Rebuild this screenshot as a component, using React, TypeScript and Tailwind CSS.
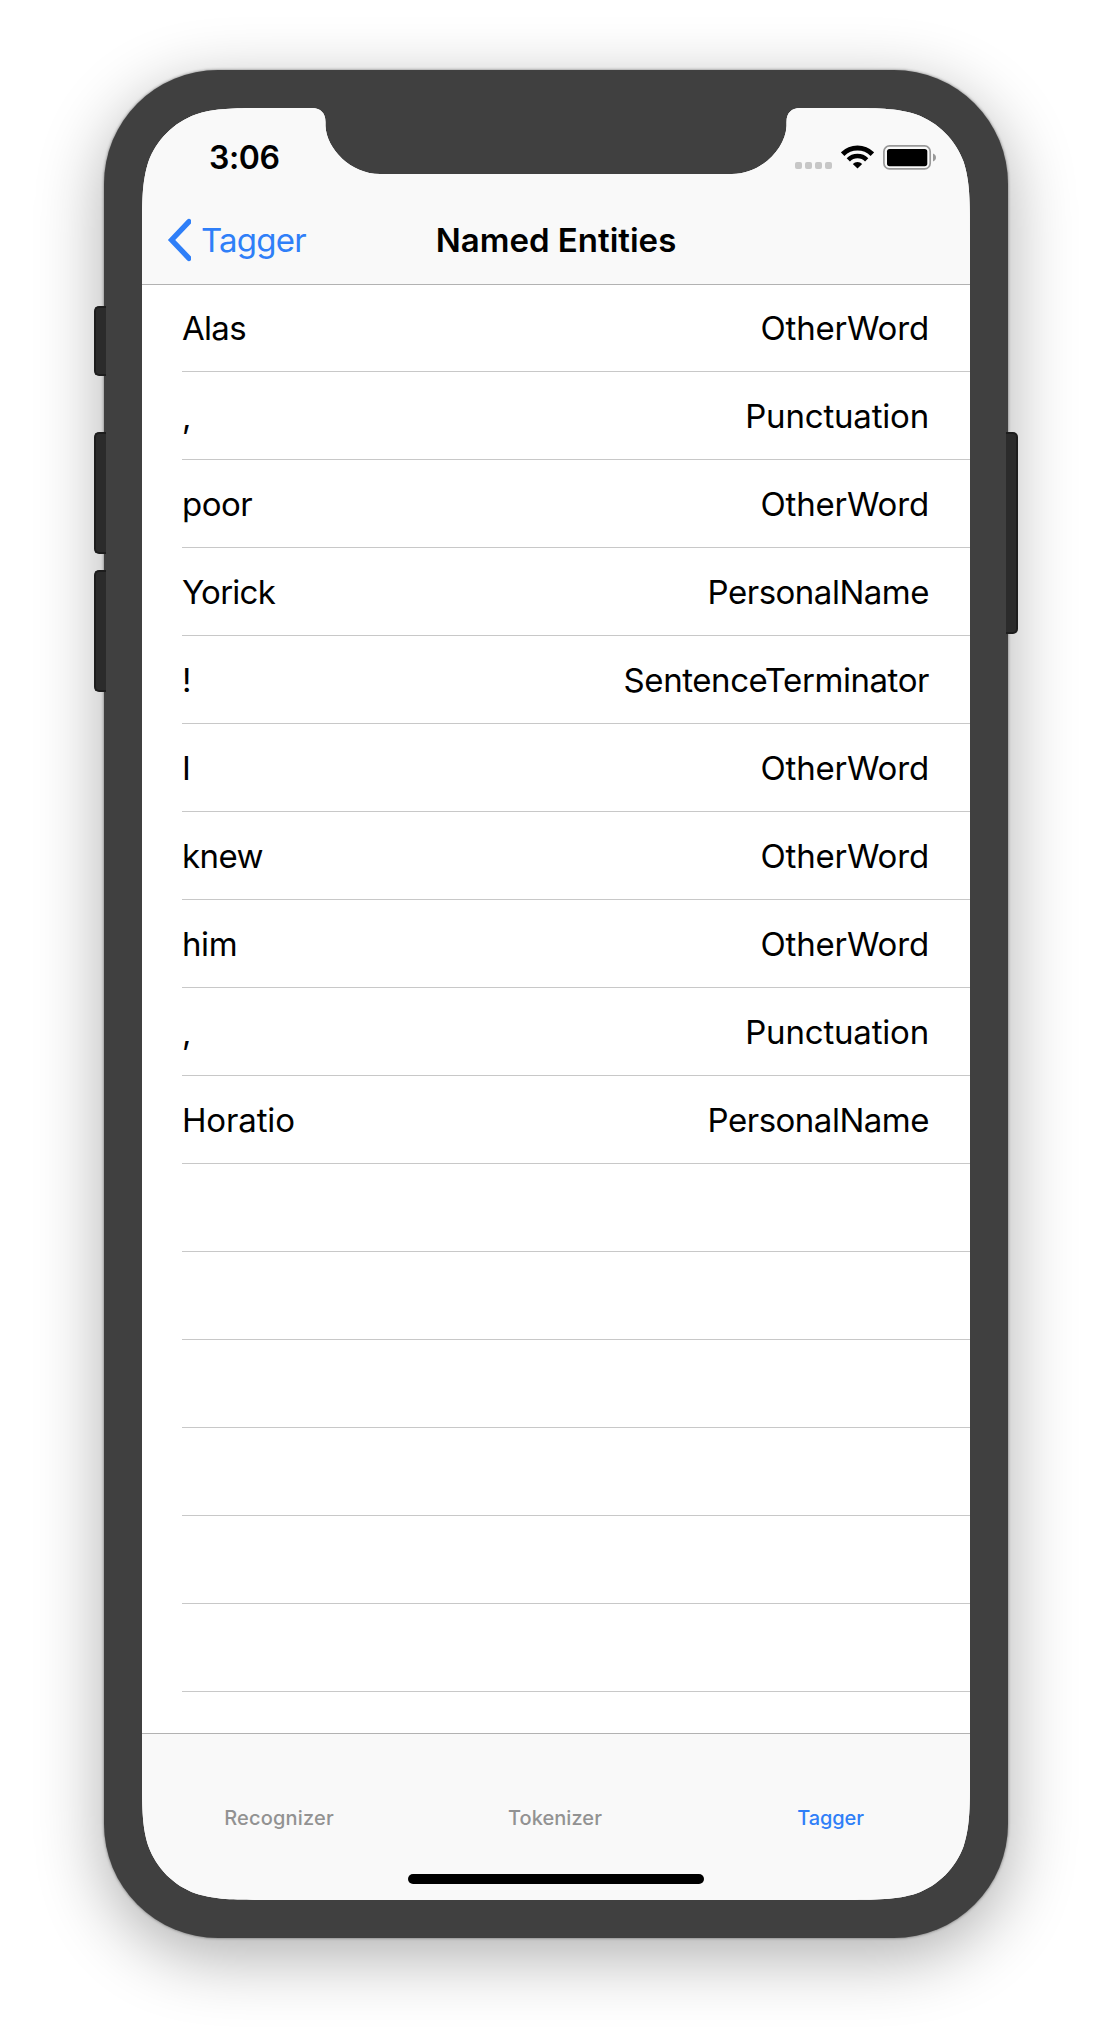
type Entity = { word: string; wordTracking: string; tag: string; tagTracking: string };

const other = { tag: "OtherWord", tagTracking: "tracking-[-0.15px]" };
const punctuation = { tag: "Punctuation", tagTracking: "tracking-[-0.19px]" };
const person = { tag: "PersonalName", tagTracking: "tracking-[-0.49px]" };
const terminator = { tag: "SentenceTerminator", tagTracking: "tracking-[-0.43px]" };

const entities: Entity[] = [
  { word: "Alas", wordTracking: "tracking-[-0.7px]", ...other },
  { word: ",", wordTracking: "tracking-normal", ...punctuation },
  { word: "poor", wordTracking: "tracking-[-0.5px]", ...other },
  { word: "Yorick", wordTracking: "tracking-[-0.75px]", ...person },
  { word: "!", wordTracking: "tracking-normal", ...terminator },
  { word: "I", wordTracking: "tracking-normal", ...other },
  { word: "knew", wordTracking: "tracking-[-0.6px]", ...other },
  { word: "him", wordTracking: "tracking-[-0.4px]", ...other },
  { word: ",", wordTracking: "tracking-normal", ...punctuation },
  { word: "Horatio", wordTracking: "tracking-[-0.15px]", ...person },
];

const emptyRows = 6;

function StatusIcons() {
  return (
    <div className="flex items-center">
      <div className="mt-[17px] flex gap-[3px]">
        {[0, 1, 2, 3].map((i) => (
          <span key={i} className="size-[7px] rounded-[2px] bg-[#c7c7c7]" />
        ))}
      </div>
      <svg className="ml-[9px] h-[24px] w-[33px]" viewBox="0 0 33 24" fill="none" stroke="#000">
        <path d="M1.65 9.15A21 21 0 0 1 31.35 9.15" strokeWidth="4.9" />
        <path d="M7.3 14.8A13 13 0 0 1 25.7 14.8" strokeWidth="4.6" />
        <path d="M16.5 23.6L11.8 18.9A6.7 6.7 0 0 1 21.2 18.9Z" fill="#000" stroke="none" />
      </svg>
      <svg className="ml-[9px] h-[25px] w-[53px]" viewBox="0 0 53 25">
        <rect x="0.9" y="0.9" width="46.3" height="23" rx="5.6" fill="none" stroke="#999" strokeWidth="1.7" />
        <rect x="4" y="4" width="40.3" height="17.2" rx="2.6" fill="#000" />
        <path d="M50 8.4C51.8 9 53 10.6 53 12.4S51.8 15.8 50 16.4Z" fill="#999" />
      </svg>
    </div>
  );
}

function Header() {
  return (
    <header className="relative h-[177px] border-b border-[#b2b2b2] bg-[#f9f9f9]">
      <div className="flex h-[88px] items-center justify-between pt-[10px] pr-[34px] pl-[67px]">
        <span className="pt-[2px] text-[32px] leading-none font-semibold tracking-[-0.36px]">3:06</span>
        <StatusIcons />
      </div>
      <div className="grid h-[88px] grid-cols-[1fr_auto_1fr] items-center text-[33px] leading-10">
        <button className="flex items-center pl-[25px] text-left text-[#2f7ff8]">
          <svg className="h-[44px] w-[24px]" viewBox="0 0 24 44" fill="none" stroke="currentColor">
            <path d="M22 3.7L4.6 22L22 40.3" strokeWidth="5.4" strokeLinecap="round" />
          </svg>
          <span className="ml-[10px] tracking-[-0.8px]">Tagger</span>
        </button>
        <h1 className="font-semibold">Named Entities</h1>
      </div>
    </header>
  );
}

function EntityList() {
  return (
    <ul className="-mt-px min-h-0 flex-1 overflow-hidden pl-10 text-[33px] leading-10">
      {entities.map((e, i) => (
        <li key={i} className="flex h-[88px] items-center justify-between border-b border-[#c8c8c8] pt-px pr-[41px]">
          <span className={e.wordTracking}>{e.word}</span>
          <span className={e.tagTracking}>{e.tag}</span>
        </li>
      ))}
      {Array.from({ length: emptyRows }, (_, i) => (
        <li key={`empty-${i}`} className="h-[88px] border-b border-[#c8c8c8]" />
      ))}
    </ul>
  );
}

function TabBar() {
  return (
    <footer className="h-[167px] border-t border-[#b2b2b2] bg-[#f9f9f9]">
      <nav className="grid grid-cols-3 pt-[70px] text-center text-[20px] leading-7 font-medium text-[#929292]">
        <span className="pr-[2px] tracking-[0.18px]">Recognizer</span>
        <span className="pr-[2px] tracking-[0.05px]">Tokenizer</span>
        <span className="pr-[3px] tracking-[-0.1px] text-[#2f7ff8]">Tagger</span>
      </nav>
      <div className="mx-auto mt-[42px] h-[10px] w-[296px] rounded-full bg-black" />
    </footer>
  );
}

export default function App() {
  return (
    <div className="h-[2040px] w-[1112px] overflow-hidden bg-white pt-[70px] font-[Inter,sans-serif] text-black">
      <div className="relative mx-auto h-[1868px] w-[904px] rounded-[114px] bg-[#404040] p-[38px] shadow-[0_0_3px_rgba(0,0,0,0.5),0_18px_68px_rgba(0,0,0,0.32)]">
        <div className="absolute top-[236px] -left-[10px] h-[70px] w-[12px] rounded-l-[5px] border-2 border-r-0 border-[#1d1d1d] bg-[#2b2b2b]" />
        <div className="absolute top-[362px] -left-[10px] h-[122px] w-[12px] rounded-l-[5px] border-2 border-r-0 border-[#1d1d1d] bg-[#2b2b2b]" />
        <div className="absolute top-[500px] -left-[10px] h-[122px] w-[12px] rounded-l-[5px] border-2 border-r-0 border-[#1d1d1d] bg-[#2b2b2b]" />
        <div className="absolute top-[362px] -right-[10px] h-[202px] w-[12px] rounded-r-[5px] border-2 border-l-0 border-[#1d1d1d] bg-[#2b2b2b]" />
        <div className="flex h-[1792px] w-[828px] flex-col bg-white [clip-path:path('M129.9_0H170C178.5_0_183.5_5_183.5_14V18C184.5_41_209_66_238_66H590C619_66_643.5_41_644.5_18V14C644.5_5_649.5_0_658_0H698.1C735.5_0_754.2_0_774.3_6.4C796.3_14.4_813.6_31.7_821.6_53.7C828_73.8_828_92.5_828_129.9V1662.1C828_1699.5_828_1718.2_821.6_1738.3C813.6_1760.3_796.3_1777.6_774.3_1785.6C754.2_1792_735.5_1792_698.1_1792H129.9C92.5_1792_73.8_1792_53.7_1785.6C31.7_1777.6_14.4_1760.3_6.4_1738.3C0_1718.2_0_1699.5_0_1662.1V129.9C0_92.5_0_73.8_6.4_53.7C14.4_31.7_31.7_14.4_53.7_6.4C73.8_0_92.5_0_129.9_0Z')]">
          <Header />
          <EntityList />
          <TabBar />
        </div>
      </div>
    </div>
  );
}
